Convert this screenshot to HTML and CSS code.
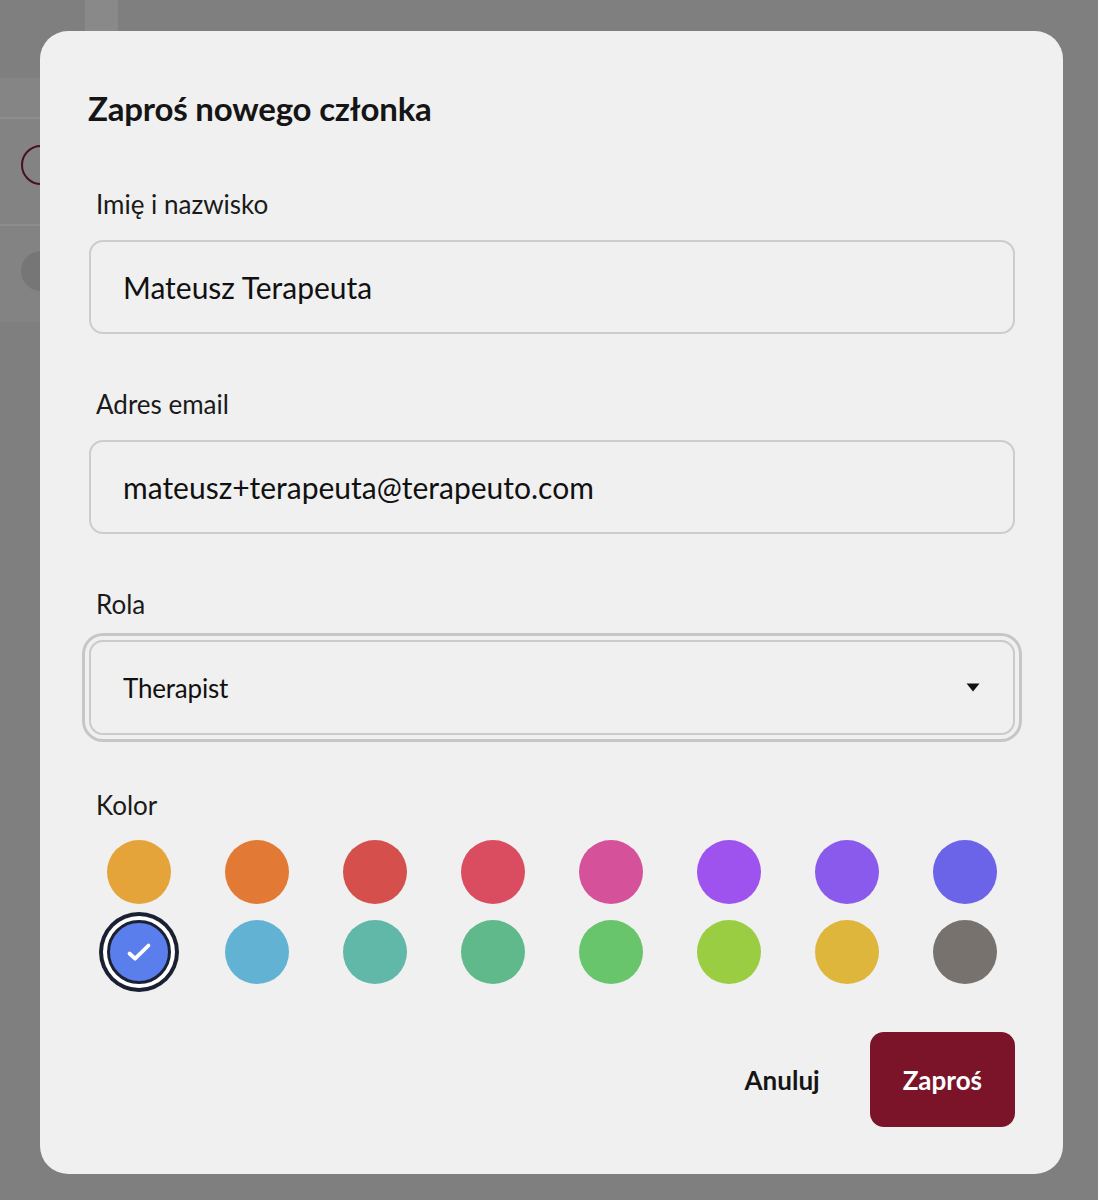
FILE: index.html
```html
<!DOCTYPE html>
<html lang="pl">
<head>
<meta charset="utf-8">
<title>Zaproś nowego członka</title>
<link rel="stylesheet" href="styles.css">
</head>
<body>
<div class="page">
  <div class="topbar"><div class="topbar-col"></div></div>
  <div class="table">
    <div class="table-head"></div>
    <div class="table-row"><span class="row-ring"></span></div>
    <div class="table-row"><span class="row-dot"></span></div>
  </div>
</div>

<div class="overlay">
  <div class="modal" role="dialog" aria-labelledby="modal-title">
    <h2 class="modal-title" id="modal-title">Zaproś nowego członka</h2>

    <div class="field">
      <label class="field-label">Imię i nazwisko</label>
      <div class="input">Mateusz Terapeuta</div>
    </div>

    <div class="field">
      <label class="field-label">Adres email</label>
      <div class="input">mateusz+terapeuta@terapeuto.com</div>
    </div>

    <div class="field">
      <label class="field-label">Rola</label>
      <div class="select">
        <span class="select-value">Therapist</span>
        <svg class="select-arrow" width="14" height="9" viewBox="0 0 14 9"><path d="M0.5 0.5h13L7 8.5z" fill="#111"/></svg>
      </div>
    </div>

    <div class="field field-colors">
      <label class="field-label">Kolor</label>
      <div class="swatches">
        <span class="swatch-cell"><span class="swatch c-amber"></span></span>
        <span class="swatch-cell"><span class="swatch c-orange"></span></span>
        <span class="swatch-cell"><span class="swatch c-red"></span></span>
        <span class="swatch-cell"><span class="swatch c-rose"></span></span>
        <span class="swatch-cell"><span class="swatch c-pink"></span></span>
        <span class="swatch-cell"><span class="swatch c-purple"></span></span>
        <span class="swatch-cell"><span class="swatch c-violet"></span></span>
        <span class="swatch-cell"><span class="swatch c-indigo"></span></span>
        <span class="swatch-cell"><span class="swatch c-blue selected">
          <svg width="30" height="30" viewBox="0 0 30 30"><path d="M5.5 16.5l5.6 5.2L24.5 8.5" fill="none" stroke="#fff" stroke-width="3.8" stroke-linecap="round" stroke-linejoin="round"/></svg>
        </span></span>
        <span class="swatch-cell"><span class="swatch c-sky"></span></span>
        <span class="swatch-cell"><span class="swatch c-teal"></span></span>
        <span class="swatch-cell"><span class="swatch c-emerald"></span></span>
        <span class="swatch-cell"><span class="swatch c-green"></span></span>
        <span class="swatch-cell"><span class="swatch c-lime"></span></span>
        <span class="swatch-cell"><span class="swatch c-yellow"></span></span>
        <span class="swatch-cell"><span class="swatch c-stone"></span></span>
      </div>
    </div>

    <div class="actions">
      <button class="btn btn-ghost" type="button">Anuluj</button>
      <button class="btn btn-primary" type="button">Zaproś</button>
    </div>
  </div>
</div>
</body>
</html>
```

FILE: styles.css
```css
* { box-sizing: border-box; }

html, body {
  margin: 0;
  padding: 0;
}

body {
  background: #7f7f7f;
  font-family: "Lato", "Noto Sans", sans-serif;
  color: #151515;
  min-height: 1200px;
}

/* underlying page (dimmed) */
.page {
  display: flex;
  flex-direction: column;
}

.topbar {
  height: 78px;
  display: flex;
}

.topbar-col {
  margin-left: 85px;
  width: 33px;
  background: #898989;
}

.table {
  width: 600px;
  background: #838383;
  display: flex;
  flex-direction: column;
}

.table-head {
  height: 41px;
  background: #858585;
  border-bottom: 2px solid #8d8d8d;
}

.table-row {
  height: 107px;
  border-bottom: 2px solid #8d8d8d;
  display: flex;
  align-items: center;
  padding-left: 21px;
}

.table-row:last-child {
  height: 96px;
  border-bottom: none;
}

.row-ring {
  width: 40px;
  height: 40px;
  border-radius: 50%;
  border: 2px solid #4a1020;
  margin-top: -14px;
}

.row-dot {
  width: 40px;
  height: 40px;
  border-radius: 50%;
  background: #767676;
  margin-top: -6px;
}

/* modal */
.overlay {
  position: fixed;
  inset: 0;
}

.modal {
  position: absolute;
  left: 40px;
  top: 31px;
  width: 1023px;
  height: 1143px;
  background: #f0f0f0;
  border-radius: 28px;
  padding: 57px 48px 48px 48px;
  display: flex;
  flex-direction: column;
}

.modal-title {
  margin: 0;
  font-size: 33px;
  line-height: 40px;
  font-weight: 700;
  color: #151515;
  letter-spacing: -0.2px;
}

.field {
  display: flex;
  flex-direction: column;
  gap: 20px;
  padding-left: 1px;
  margin-top: 60px;
}

.field + .field {
  margin-top: 54px;
}

.field-label {
  font-size: 26px;
  line-height: 32px;
  padding-left: 7px;
  color: #1a1a1a;
}

.input {
  height: 94px;
  border: 2px solid #cccccc;
  border-radius: 14px;
  background: #f0f0f0;
  display: flex;
  align-items: center;
  padding-left: 32px;
  font-size: 30px;
  color: #111;
}

.select {
  height: 95px;
  border: 2px solid #cbcbcb;
  border-radius: 14px;
  box-shadow: 0 0 0 4px #f0f0f0, 0 0 0 7px #c6c6c6;
  display: flex;
  align-items: center;
  justify-content: space-between;
  padding: 0 33px 0 32px;
  font-size: 26px;
  color: #111;
}

.select-value {
  letter-spacing: -0.2px;
}

.select-arrow {
  display: block;
}

.field-colors {
  gap: 19px;
}

.swatches {
  display: grid;
  grid-template-columns: repeat(8, 100px);
  justify-content: space-between;
  row-gap: 16px;
}

.swatch-cell {
  display: flex;
  justify-content: center;
}

.swatch {
  width: 64px;
  height: 64px;
  border-radius: 50%;
  display: flex;
  align-items: center;
  justify-content: center;
}

.swatch.selected {
  border: 3px solid #1c2033;
  box-shadow: 0 0 0 4px #ffffff, 0 0 0 8px #1c2033;
}

.c-amber   { background: #e5a43a; }
.c-orange  { background: #e27935; }
.c-red     { background: #d5504c; }
.c-rose    { background: #da4d61; }
.c-pink    { background: #d5529a; }
.c-purple  { background: #9e52ee; }
.c-violet  { background: #8a5aec; }
.c-indigo  { background: #6b63e8; }
.c-blue    { background: #5a7eec; }
.c-sky     { background: #62b3d3; }
.c-teal    { background: #62b8a8; }
.c-emerald { background: #60b98a; }
.c-green   { background: #68c56c; }
.c-lime    { background: #9acd42; }
.c-yellow  { background: #dfb63c; }
.c-stone   { background: #77726e; }

.actions {
  margin-top: 48px;
  display: flex;
  justify-content: flex-end;
  gap: 17px;
}

.btn {
  height: 95px;
  border: none;
  border-radius: 14px;
  font-family: "Lato", "Noto Sans", sans-serif;
  font-size: 26px;
  font-weight: 700;
  padding: 0 33px;
  cursor: pointer;
}

.btn-ghost {
  background: transparent;
  color: #151515;
}

.btn-primary {
  background: #7b1428;
  color: #ffffff;
}
```
